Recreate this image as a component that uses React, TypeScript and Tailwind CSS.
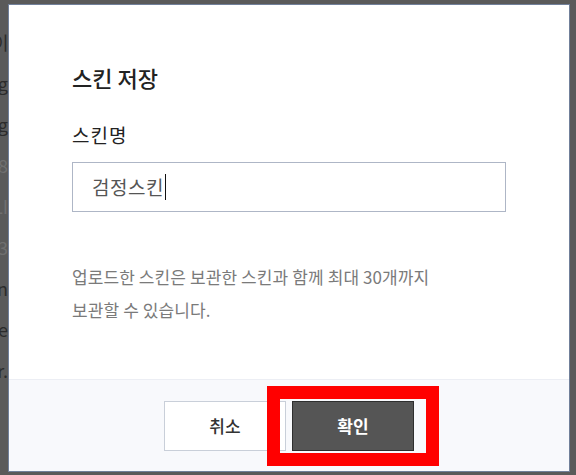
const bgLines = [
  { t: "이", c: "text-[#2b2b2b]" },
  { t: "g", c: "text-[#2b2b2b]" },
  { t: "g", c: "text-[#2b2b2b]" },
  { t: "8", c: "text-[#6f6f6f]" },
  { t: "LI", c: "text-[#6f6f6f]" },
  { t: "3", c: "text-[#6f6f6f]" },
  { t: "n", c: "text-[#2b2b2b]" },
  { t: "e", c: "text-[#2b2b2b]" },
  { t: "r.", c: "text-[#2b2b2b]" },
];

const App = () => {
  return (
    <div className="relative w-[576px] h-[475px] overflow-hidden bg-[#5a5a5a] font-['Noto_Sans_CJK_KR',sans-serif]">
      {/* page behind the modal */}
      <div className="flex flex-col pt-[30px] -ml-[8px] gap-[17px]">
        {bgLines.map((l, i) => (
          <p key={i} className={`text-[18px] leading-[24px] text-right w-[16px] ${l.c}`}>{l.t}</p>
        ))}
      </div>

      {/* modal */}
      <div className="absolute left-[8px] top-[4px] w-[562px] h-[468px] bg-white border border-[#71809a] flex flex-col">
        <div className="flex-1 flex flex-col px-[63px]">
          <h2 className="mt-[58px] text-[22px] leading-[28px] font-medium text-[#222]">스킨 저장</h2>
          <label className="mt-[32px] text-[19px] leading-[24px] tracking-[1px] text-[#222]">스킨명</label>
          <div className="mt-[15px] w-[434px] h-[50px] border border-[#aeb6c6] flex items-center pl-[19px]">
            <span className="text-[19px] tracking-[0.5px] text-[#555]">검정스킨</span>
            <span className="ml-[1px] w-px h-[26px] bg-[#111]" />
          </div>
          <p className="mt-[48px] text-[17px] leading-[33px] tracking-[0.1px] text-[#7a7a7a]">
            업로드한 스킨은 보관한 스킨과 함께 최대 30개까지
            <br />
            보관할 수 있습니다.
          </p>
        </div>
        <div className="h-[92px] bg-[#f8f9fc] border-t border-[#eceef4] flex justify-center pt-[21px] gap-[6px]">
          <button className="w-[122px] h-[50px] bg-white border border-[#c9cfd9] text-[17px] font-medium text-[#333]">
            취소
          </button>
          <button className="w-[122px] h-[50px] bg-[#555] border border-[#2e2e2e] text-[17px] font-bold text-white">
            확인
          </button>
        </div>
      </div>

      {/* highlight annotation */}
      <div className="absolute left-[267px] top-[386px] w-[172px] h-[80px] border-[13px] border-[#ff0000]" />
    </div>
  );
};

export default App;
